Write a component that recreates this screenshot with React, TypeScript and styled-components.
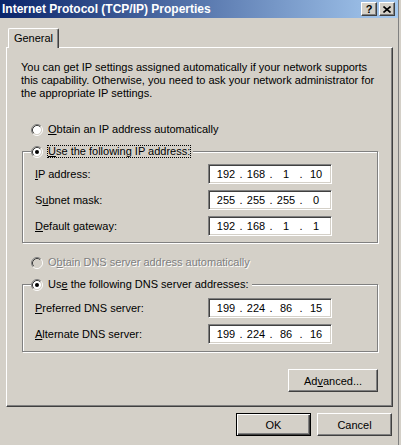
import { Fragment } from "react";
import styled, { createGlobalStyle, css } from "styled-components";

const GlobalStyle = createGlobalStyle`
    html, body {
        margin: 0;
        padding: 0;
        background: #d4d0c8;
    }
    body {
        font-family: "Liberation Sans", Arial, sans-serif;
        font-size: 11px;
        color: #000;
    }
`;

const RadioIcon = ({ checked, disabled }: { checked?: boolean; disabled?: boolean }) => (
    <svg width="12" height="12" viewBox="0 0 12 12">
        <circle cx="6" cy="6" r="4.2" fill={disabled ? "#d4d0c8" : "#fff"} />
        <path d="M2.11 9.89A5.5 5.5 0 0 1 9.89 2.11" stroke="#808080" fill="none" />
        <path d="M9.89 2.11A5.5 5.5 0 0 1 2.11 9.89" stroke="#fff" fill="none" />
        <path d="M2.82 9.18A4.5 4.5 0 0 1 9.18 2.82" stroke="#404040" fill="none" />
        <path d="M9.18 2.82A4.5 4.5 0 0 1 2.82 9.18" stroke="#d4d0c8" fill="none" />
        {checked && <circle cx="6" cy="6" r="2" fill="#000" />}
    </svg>
);

const IpField = ({ value }: { value: string }) => (
    <Edit>
        {value.split(".").map((part, i) => (
            <Fragment key={i}>
                {i > 0 && <Dot>.</Dot>}
                <Octet>{part}</Octet>
            </Fragment>
        ))}
    </Edit>
);

const App = () => {
    return (
        <>
            <GlobalStyle />
            <Window>
                <TitleBar>
                    <Title>Internet Protocol (TCP/IP) Properties</Title>
                    <CaptionButton>?</CaptionButton>
                    <CaptionButton>
                        <svg width="8" height="7" viewBox="0 0 8 7">
                            <path d="M0.5 0.5L7.5 6.5M7.5 0.5L0.5 6.5" stroke="#000" strokeWidth="1.6" />
                        </svg>
                    </CaptionButton>
                </TitleBar>

                <Body>
                    <TabStrip>
                        <Tab>General</Tab>
                    </TabStrip>

                    <Panel>
                        <Intro>
                            You can get IP settings assigned automatically if your network supports
                            <br />
                            this capability. Otherwise, you need to ask your network administrator for
                            <br />
                            the appropriate IP settings.
                        </Intro>

                        <RadioRow $top={23}>
                            <RadioIcon />
                            <RadioLabel>
                                <u>O</u>btain an IP address automatically
                            </RadioLabel>
                        </RadioRow>

                        <GroupBox $top={15}>
                            <Legend>
                                <RadioIcon checked />
                                <RadioLabel $focused>
                                    <u>U</u>se the following IP address:
                                </RadioLabel>
                            </Legend>
                            <Rows>
                                <FieldRow>
                                    <span>
                                        <u>I</u>P address:
                                    </span>
                                    <IpField value="192.168.1.10" />
                                </FieldRow>
                                <FieldRow>
                                    <span>
                                        S<u>u</u>bnet mask:
                                    </span>
                                    <IpField value="255.255.255.0" />
                                </FieldRow>
                                <FieldRow>
                                    <span>
                                        <u>D</u>efault gateway:
                                    </span>
                                    <IpField value="192.168.1.1" />
                                </FieldRow>
                            </Rows>
                        </GroupBox>

                        <RadioRow $top={13}>
                            <RadioIcon disabled />
                            <RadioLabel $disabled>
                                O<u>b</u>tain DNS server address automatically
                            </RadioLabel>
                        </RadioRow>

                        <GroupBox $top={15}>
                            <Legend>
                                <RadioIcon checked />
                                <RadioLabel>
                                    Us<u>e</u> the following DNS server addresses:
                                </RadioLabel>
                            </Legend>
                            <Rows $top={7} $bottom={7}>
                                <FieldRow>
                                    <span>
                                        <u>P</u>referred DNS server:
                                    </span>
                                    <IpField value="199.224.86.15" />
                                </FieldRow>
                                <FieldRow>
                                    <span>
                                        <u>A</u>lternate DNS server:
                                    </span>
                                    <IpField value="199.224.86.16" />
                                </FieldRow>
                            </Rows>
                        </GroupBox>

                        <AdvancedRow>
                            <Button $width={90}>
                                Ad<u>v</u>anced...
                            </Button>
                        </AdvancedRow>
                    </Panel>

                    <Footer>
                        <Button $default>OK</Button>
                        <Button>Cancel</Button>
                    </Footer>
                </Body>
            </Window>
        </>
    );
};

const raised = css`
    border: 1px solid;
    border-color: #fff #404040 #404040 #fff;
    box-shadow: inset -1px -1px 0 #808080, inset 1px 1px 0 #d4d0c8;
`;

const Window = styled.div`
    width: 399px;
    height: 445px;
    box-sizing: border-box;
    border-right: 1px solid #808080;
    display: flex;
    flex-direction: column;
`;

const TitleBar = styled.div`
    height: 18px;
    display: flex;
    align-items: center;
    gap: 2px;
    padding: 0 3px 0 2px;
    background: linear-gradient(to right, #0a246a, #a6caf0);
`;

const Title = styled.div`
    flex: 1;
    color: #fff;
    font-weight: bold;
    font-size: 12px;
    white-space: nowrap;
`;

const CaptionButton = styled.div`
    ${raised};
    width: 16px;
    height: 14px;
    box-sizing: border-box;
    background: #d4d0c8;
    display: flex;
    align-items: center;
    justify-content: center;
    font-weight: bold;
    font-size: 11px;
    line-height: 1;
`;

const Body = styled.div`
    flex: 1;
    padding: 10px 5px 0 6px;
    display: flex;
    flex-direction: column;
`;

const TabStrip = styled.div`
    display: flex;
    padding-left: 2px;
`;

const Tab = styled.div`
    position: relative;
    z-index: 1;
    width: 51px;
    height: 20px;
    box-sizing: border-box;
    margin-bottom: -1px;
    border-top: 1px solid #fff;
    border-left: 1px solid #fff;
    border-right: 1px solid #404040;
    box-shadow: inset -1px 0 0 #808080;
    border-radius: 2px 2px 0 0;
    background: #d4d0c8;
    display: flex;
    align-items: center;
    justify-content: center;
    padding-bottom: 1px;
`;

const Panel = styled.div`
    border: 1px solid;
    border-color: #fff #404040 #404040 #fff;
    box-shadow: inset -1px -1px 0 #808080;
    padding: 13px 14px 14px 14px;
    display: flex;
    flex-direction: column;
`;

const Intro = styled.p`
    margin: 0;
    line-height: 13px;
    white-space: nowrap;
`;

const RadioRow = styled.div<{ $top: number }>`
    display: flex;
    align-items: center;
    height: 13px;
    margin: ${(p) => p.$top}px 0 0 10px;
    gap: 4px;
`;

const RadioLabel = styled.span<{ $focused?: boolean; $disabled?: boolean }>`
    line-height: 11px;
    padding: 0;
    border: 1px dotted ${(p) => (p.$focused ? "#000" : "transparent")};
    white-space: nowrap;
    ${(p) =>
        p.$disabled &&
        css`
            color: #808080;
            text-shadow: 1px 1px 0 #fff;
        `}
`;

const GroupBox = styled.div<{ $top: number }>`
    display: flex;
    flex-direction: column;
    align-items: flex-start;
    margin: ${(p) => p.$top}px 0 0 1px;
    border: 1px solid #808080;
    box-shadow: 1px 1px 0 #fff, inset 1px 1px 0 #fff;
`;

const Legend = styled.div`
    display: flex;
    align-items: center;
    gap: 4px;
    height: 13px;
    margin: -7px 0 0 8px;
    padding-right: 2px;
    background: #d4d0c8;
`;

const Rows = styled.div<{ $top?: number; $bottom?: number }>`
    align-self: stretch;
    display: flex;
    flex-direction: column;
    gap: 6px;
    padding: ${(p) => p.$top ?? 6}px 45px ${(p) => p.$bottom ?? 6}px 12px;
`;

const FieldRow = styled.div`
    display: flex;
    align-items: center;
    justify-content: space-between;
    height: 20px;
    white-space: nowrap;
`;

const Edit = styled.div`
    width: 124px;
    height: 20px;
    box-sizing: border-box;
    border: 1px solid;
    border-color: #808080 #fff #fff #808080;
    box-shadow: inset 1px 1px 0 #404040, inset -1px -1px 0 #d4d0c8;
    background: #fff;
    display: flex;
    align-items: center;
    padding-left: 4px;
`;

const Octet = styled.span`
    width: 26px;
    text-align: center;
`;

const Dot = styled.span`
    width: 4px;
    text-align: center;
`;

const AdvancedRow = styled.div`
    display: flex;
    justify-content: flex-end;
    margin-top: 17px;
`;

const Button = styled.div<{ $width?: number; $default?: boolean }>`
    width: ${(p) => p.$width ?? 75}px;
    height: 23px;
    box-sizing: border-box;
    background: #d4d0c8;
    display: flex;
    align-items: center;
    justify-content: center;
    ${(p) =>
        p.$default
            ? css`
                  border: 1px solid #000;
                  box-shadow: inset 1px 1px 0 #fff, inset -1px -1px 0 #404040, inset -2px -2px 0 #808080;
              `
            : raised}
`;

const Footer = styled.div`
    display: flex;
    justify-content: flex-end;
    gap: 6px;
    margin: 6px 1px 0 0;
`;

export default App;
